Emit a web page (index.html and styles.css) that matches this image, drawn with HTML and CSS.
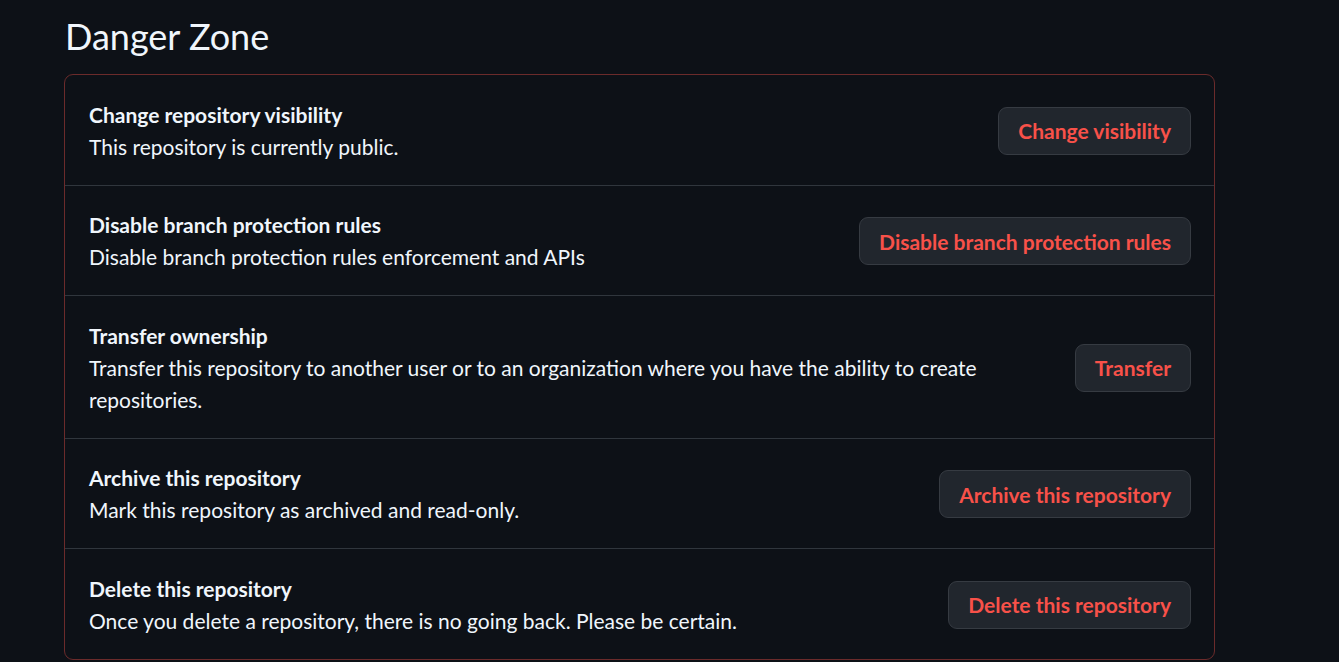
FILE: index.html
```html
<!DOCTYPE html>
<html lang="en">
<head>
<meta charset="utf-8">
<title>Danger Zone</title>
<link rel="stylesheet" href="styles.css">
</head>
<body>
<main class="page">
  <h2 class="subhead">Danger Zone</h2>
  <div class="danger-box">
    <div class="row">
      <div class="info">
        <div class="row-title">Change repository visibility</div>
        <div class="row-desc">This repository is currently public.</div>
      </div>
      <button class="btn-danger">Change visibility</button>
    </div>
    <div class="row">
      <div class="info">
        <div class="row-title">Disable branch protection rules</div>
        <div class="row-desc">Disable branch protection rules enforcement and APIs</div>
      </div>
      <button class="btn-danger">Disable branch protection rules</button>
    </div>
    <div class="row">
      <div class="info narrow">
        <div class="row-title">Transfer ownership</div>
        <div class="row-desc">Transfer this repository to another user or to an organization where you have the ability to create repositories.</div>
      </div>
      <button class="btn-danger">Transfer</button>
    </div>
    <div class="row">
      <div class="info">
        <div class="row-title">Archive this repository</div>
        <div class="row-desc">Mark this repository as archived and read-only.</div>
      </div>
      <button class="btn-danger">Archive this repository</button>
    </div>
    <div class="row">
      <div class="info">
        <div class="row-title">Delete this repository</div>
        <div class="row-desc">Once you delete a repository, there is no going back. Please be certain.</div>
      </div>
      <button class="btn-danger">Delete this repository</button>
    </div>
  </div>
</main>
</body>
</html>
```

FILE: styles.css
```css
html, body {
  margin: 0;
  padding: 0;
  background: #0d1117;
  color: #e6edf3;
  font-family: Lato, "Noto Sans", "Liberation Sans", sans-serif;
}
.page {
  width: 1151px;
  padding: 14px 0 0 64px;
}
.subhead {
  margin: 0 0 15px 1px;
  font-size: 36px;
  font-weight: 400;
  line-height: 45px;
  color: #f0f6fc;
}
.danger-box {
  border: 1px solid #6b2b2b;
  border-radius: 9px;
}
.row {
  display: flex;
  align-items: center;
  justify-content: space-between;
  padding: 23.5px 23px 22px 24px;
  border-top: 1px solid #30363d;
}
.row:first-child {
  border-top: none;
}
.info {
  flex: 1 1 auto;
}
.info.narrow {
  max-width: 920px;
}
.row-title {
  font-size: 21px;
  font-weight: 700;
  line-height: 32px;
  color: #f0f6fc;
}
.row-desc {
  font-size: 21px;
  line-height: 32px;
  color: #f0f6fc;
}
.btn-danger {
  flex: 0 0 auto;
  height: 48px;
  padding: 0 19px;
  margin-left: 24px;
  background: #21262d;
  border: 1px solid #363b42;
  border-radius: 9px;
  color: #f85149;
  font-family: Lato, "Noto Sans", "Liberation Sans", sans-serif;
  font-size: 21px;
  font-weight: 700;
  cursor: pointer;
}
```
